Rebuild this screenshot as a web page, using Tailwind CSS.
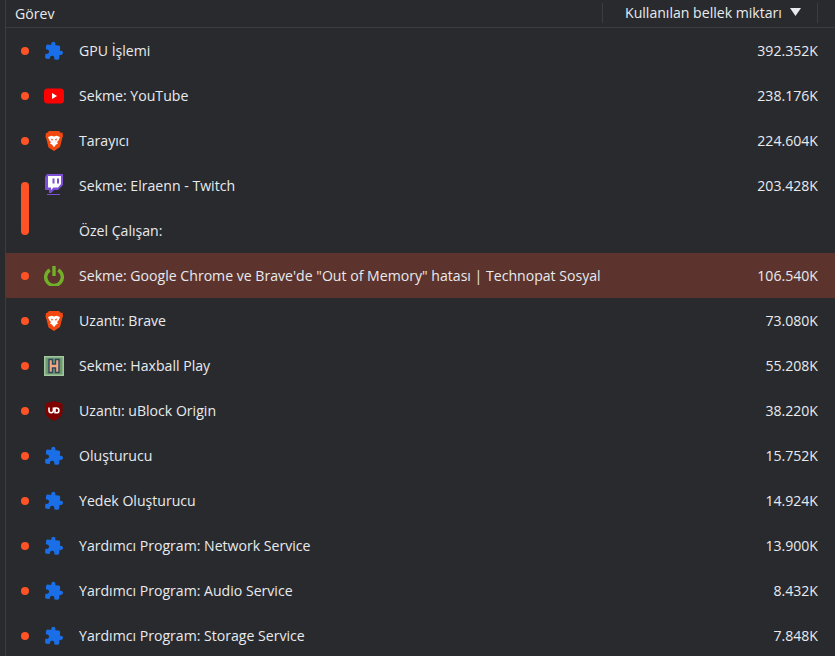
<!DOCTYPE html>
<html lang="tr">
<head>
    <meta charset="UTF-8">
    <title>Görev Yöneticisi</title>
    <script src="https://cdn.jsdelivr.net/npm/@tailwindcss/browser@4"></script>
</head>
<body class="bg-[#292a2d] h-screen overflow-hidden text-[#e8eaed] text-[14.1px] font-['Open_Sans','Noto_Sans',sans-serif]">
    <svg class="hidden">
        <symbol id="puzzle" viewBox="0 0 24 24">
            <path fill="#1a6fe8" transform="rotate(5 12 12)" d="M20.5 11H19V7c0-1.1-.9-2-2-2h-4V3.5C13 2.12 11.88 1 10.5 1S8 2.12 8 3.5V5H4c-1.1 0-1.99.9-1.99 2v3.8H3.5c1.49 0 2.7 1.21 2.7 2.7s-1.21 2.7-2.7 2.7H2V20c0 1.1.9 2 2 2h3.8v-1.5c0-1.49 1.21-2.7 2.7-2.7 1.49 0 2.7 1.21 2.7 2.7V22H17c1.1 0 2-.9 2-2v-4h1.5c1.38 0 2.5-1.12 2.5-2.5S21.88 11 20.5 11z"/>
        </symbol>
        <symbol id="brave" viewBox="0 0 18 20">
            <path fill="#f1480f" d="M4 0h10l2 2 1.500-.500.500 3.500-1 3-2 8L9 20l-5.500-3.500-2-8-1-3 .500-3.500L2 2z"/>
            <path fill="#fff" d="M3 6l3.500-1.200L9 5.600l2.500-.800L15 6l-1.500 3.500L12 11l1 1.500-2.200 1.300-1.300 2h-1l-1.300-2L5 12.500 6 11 4.500 9.500z"/>
            <path fill="#f1480f" d="M5.800 7.500l2.200.800-1 1.700zM12.200 7.500L10 8.300l1 1.700z"/>
        </symbol>
    </svg>

    <div class="ml-[5px] border-l border-[#3c3d40] h-full">
        <!-- Header -->
        <div class="flex items-center h-[28px] border-b border-[#3c3d40]">
            <div class="flex-1 pl-[9px]">Görev</div>
            <div class="flex items-center w-[216px] h-[20px] mb-[2px] border-l border-r border-[#3c3d40]">
                <span class="ml-[22px]">Kullanılan bellek miktarı</span>
                <svg class="ml-[8px] mb-[1px]" width="11" height="8" viewBox="0 0 11 8"><path fill="#e8eaed" d="M0 0h11L5.500 8z"/></svg>
            </div>
            <div class="w-[17px]"></div>
        </div>

        <!-- GPU -->
        <div class="flex items-center h-[45px] pl-[15px] pr-[17px]">
            <span class="w-[8px] h-[8px] rounded-full bg-[#ff5326]"></span>
            <svg class="ml-[15px]" width="20" height="20"><use href="#puzzle"/></svg>
            <span class="ml-[15px] flex-1">GPU İşlemi</span>
            <span>392.352K</span>
        </div>

        <div class="flex items-center h-[45px] pl-[15px] pr-[17px]">
            <span class="w-[8px] h-[8px] rounded-full bg-[#ff5326]"></span>
            <svg class="ml-[15px]" width="20" height="20" viewBox="0 0 20 20">
                <rect y="2.500" width="20" height="15" rx="3.500" fill="#f00"/>
                <path fill="#fff" d="M8 7l5 3-5 3z"/>
            </svg>
            <span class="ml-[15px] flex-1">Sekme: YouTube</span>
            <span>238.176K</span>
        </div>

        <div class="flex items-center h-[45px] pl-[15px] pr-[17px]">
            <span class="w-[8px] h-[8px] rounded-full bg-[#ff5326]"></span>
            <svg class="ml-[15px]" width="20" height="20"><use href="#brave"/></svg>
            <span class="ml-[15px] flex-1">Tarayıcı</span>
            <span>224.604K</span>
        </div>

        <!-- Twitch + dedicated worker share one process -->
        <div class="flex items-center pl-[15px]">
            <span class="w-[8px] h-[53px] rounded-full bg-[#ff5326] shrink-0"></span>
            <div class="flex-1">
                <div class="flex items-center h-[45px] pr-[17px]">
                    <svg class="ml-[15px] mb-[2px]" width="20" height="21" viewBox="0 0 20 21">
                        <path fill="#7d4fd6" d="M3 0h16v11l-5 5h-4l-3 3H5v-3H1V3z"/>
                        <path fill="#fff" d="M4 2h13v8l-3 3.500h-4.500L7 16v-2.500H4z"/>
                        <path fill="#7d4fd6" d="M8.500 4.500h2v5h-2zM13 4.500h2v5h-2z"/>
                        <path fill="#7d4fd6" d="M3 20h13v1H3z"/>
                    </svg>
                    <span class="ml-[15px] flex-1">Sekme: Elraenn - Twitch</span>
                    <span>203.428K</span>
                </div>
                <div class="flex items-center h-[45px] pl-[50px]">Özel Çalışan:</div>
            </div>
        </div>

        <!-- Selected row -->
        <div class="flex items-center h-[45px] pl-[15px] pr-[17px] bg-[#5c342d]">
            <span class="w-[8px] h-[8px] rounded-full bg-[#ff5326]"></span>
            <svg class="ml-[15px]" width="20" height="20" viewBox="0 0 20 20" fill="none" stroke="#72b029" stroke-width="3.400">
                <path d="M5.800 4a8.300 8.300 0 1 0 8.400 0"/>
                <path d="M10 0v10"/>
            </svg>
            <span class="ml-[15px] flex-1">Sekme: Google Chrome ve Brave'de "Out of Memory" hatası | Technopat Sosyal</span>
            <span>106.540K</span>
        </div>

        <div class="flex items-center h-[45px] pl-[15px] pr-[17px]">
            <span class="w-[8px] h-[8px] rounded-full bg-[#ff5326]"></span>
            <svg class="ml-[15px]" width="20" height="20"><use href="#brave"/></svg>
            <span class="ml-[15px] flex-1">Uzantı: Brave</span>
            <span>73.080K</span>
        </div>

        <div class="flex items-center h-[45px] pl-[15px] pr-[17px]">
            <span class="w-[8px] h-[8px] rounded-full bg-[#ff5326]"></span>
            <svg class="ml-[15px]" width="20" height="20" viewBox="0 0 20 20">
                <rect width="20" height="20" fill="#a3c79c"/>
                <rect x="1.500" y="1.500" width="17" height="17" fill="#6f9a6f"/>
                <path fill="#f0a880" stroke="#2f4560" stroke-width="1.400" d="M5 3.500h3.500v4.500h3V3.500H15v13h-3.500V12h-3v4.500H5z"/>
            </svg>
            <span class="ml-[15px] flex-1">Sekme: Haxball Play</span>
            <span>55.208K</span>
        </div>

        <div class="flex items-center h-[45px] pl-[15px] pr-[17px]">
            <span class="w-[8px] h-[8px] rounded-full bg-[#ff5326]"></span>
            <svg class="ml-[15px]" width="20" height="20" viewBox="0 0 20 20">
                <path fill="#800000" d="M10 0l8.500 2.500V11c0 3.500-3.500 6.500-8.500 9-5-2.500-8.500-5.500-8.500-9V2.500z"/>
                <path fill="none" stroke="#fff" stroke-width="1.600" d="M5 6.500v3a2.200 2.200 0 0 0 4.400 0v-3M11 7v4.800h1.500a2.400 2.400 0 0 0 0-4.800z"/>
            </svg>
            <span class="ml-[15px] flex-1">Uzantı: uBlock Origin</span>
            <span>38.220K</span>
        </div>

        <div class="flex items-center h-[45px] pl-[15px] pr-[17px]">
            <span class="w-[8px] h-[8px] rounded-full bg-[#ff5326]"></span>
            <svg class="ml-[15px]" width="20" height="20"><use href="#puzzle"/></svg>
            <span class="ml-[15px] flex-1">Oluşturucu</span>
            <span>15.752K</span>
        </div>

        <div class="flex items-center h-[45px] pl-[15px] pr-[17px]">
            <span class="w-[8px] h-[8px] rounded-full bg-[#ff5326]"></span>
            <svg class="ml-[15px]" width="20" height="20"><use href="#puzzle"/></svg>
            <span class="ml-[15px] flex-1">Yedek Oluşturucu</span>
            <span>14.924K</span>
        </div>

        <div class="flex items-center h-[45px] pl-[15px] pr-[17px]">
            <span class="w-[8px] h-[8px] rounded-full bg-[#ff5326]"></span>
            <svg class="ml-[15px]" width="20" height="20"><use href="#puzzle"/></svg>
            <span class="ml-[15px] flex-1">Yardımcı Program: Network Service</span>
            <span>13.900K</span>
        </div>

        <div class="flex items-center h-[45px] pl-[15px] pr-[17px]">
            <span class="w-[8px] h-[8px] rounded-full bg-[#ff5326]"></span>
            <svg class="ml-[15px]" width="20" height="20"><use href="#puzzle"/></svg>
            <span class="ml-[15px] flex-1">Yardımcı Program: Audio Service</span>
            <span>8.432K</span>
        </div>

        <div class="flex items-center h-[45px] pl-[15px] pr-[17px]">
            <span class="w-[8px] h-[8px] rounded-full bg-[#ff5326]"></span>
            <svg class="ml-[15px]" width="20" height="20"><use href="#puzzle"/></svg>
            <span class="ml-[15px] flex-1">Yardımcı Program: Storage Service</span>
            <span>7.848K</span>
        </div>
    </div>
</body>
</html>
